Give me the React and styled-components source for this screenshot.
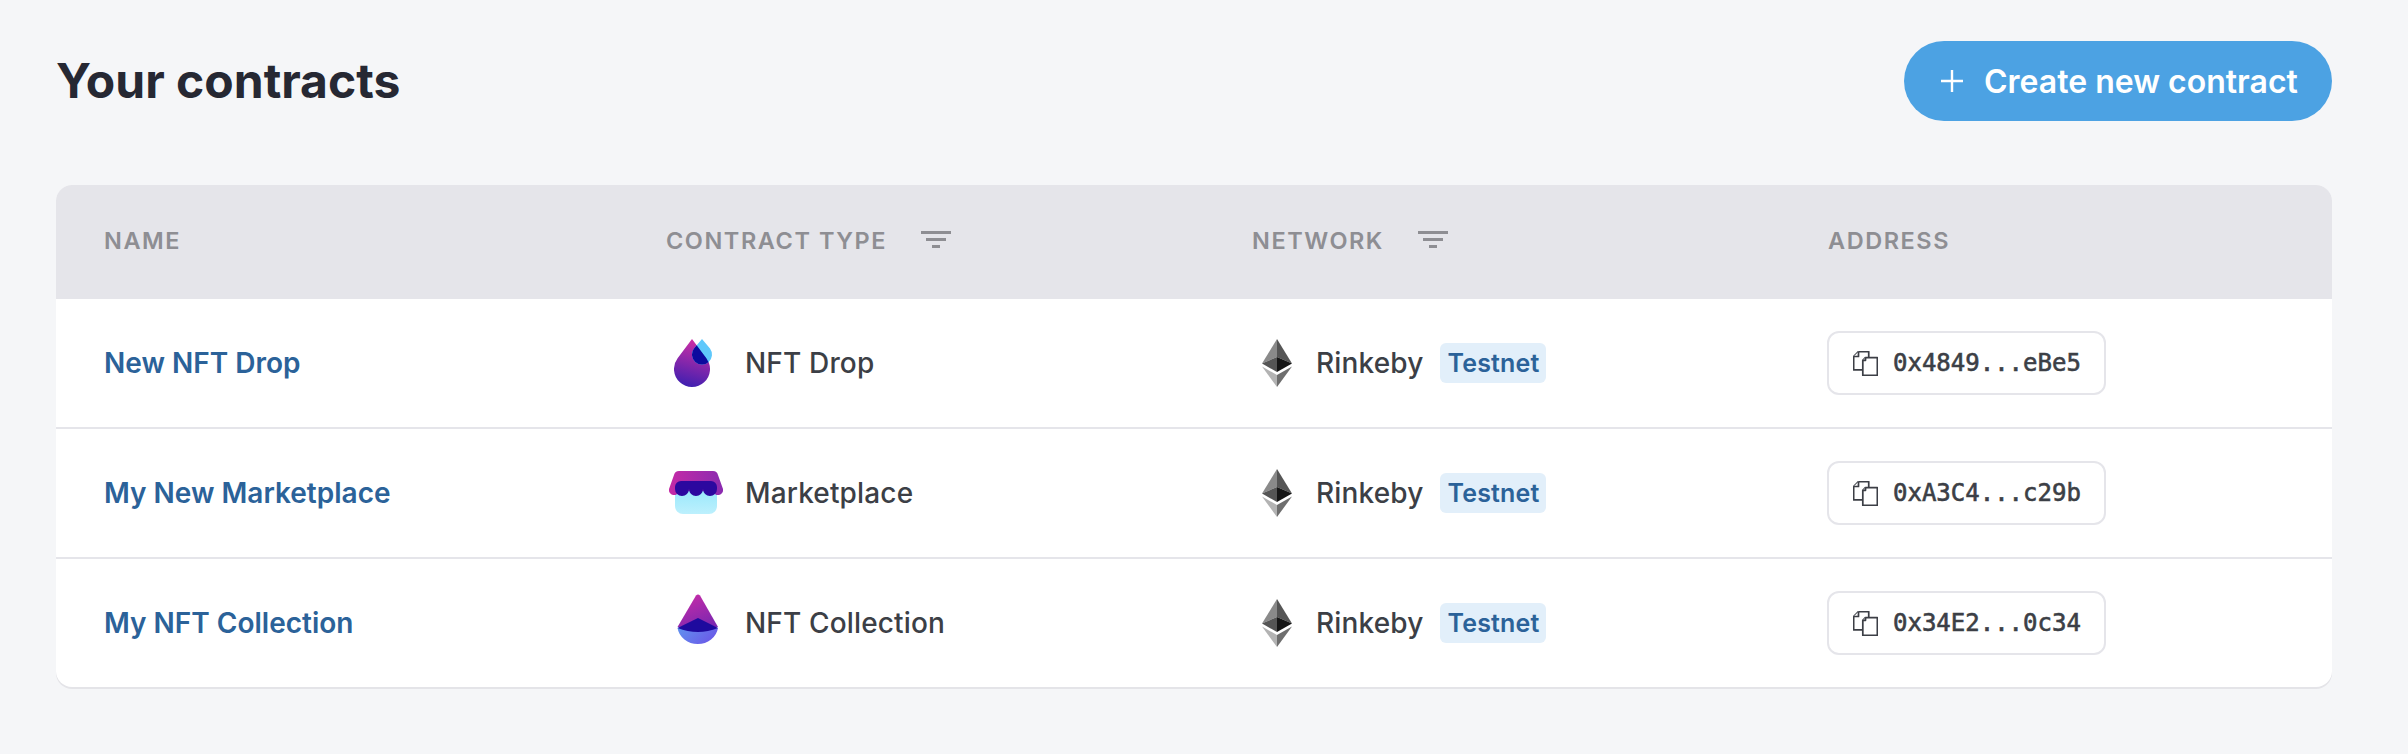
import React from "react";
import styled, { createGlobalStyle } from "styled-components";

const GlobalStyle = createGlobalStyle`
  html, body {
    margin: 0;
    background: #f5f6f8;
  }
  body {
    font-family: "Inter", "Liberation Sans", sans-serif;
  }
`;

const Page = styled.div`
  padding: 41px 76px 0 56px;
  min-height: 713px;
`;

const TopBar = styled.div`
  display: flex;
  justify-content: space-between;
  align-items: center;
  height: 80px;
  margin-bottom: 64px;
`;

const Title = styled.h1`
  margin: 0 0 2px;
  font-size: 48px;
  font-weight: 700;
  color: #262833;
`;

const CreateButton = styled.button`
  display: flex;
  align-items: center;
  gap: 20px;
  height: 80px;
  width: 428px;
  padding: 0 32px 0 36px;
  box-sizing: border-box;
  border: none;
  border-radius: 40px;
  background: #4ca2e3;
  color: #fff;
  font-family: inherit;
  font-size: 32px;
  font-weight: 600;
  white-space: nowrap;
`;

const Card = styled.div`
  border-radius: 16px;
  overflow: hidden;
  background: #fff;
  box-shadow: 0 2px 0 #e4e4e8;
`;

const HeadRow = styled.div`
  display: grid;
  grid-template-columns: 562px 586px 576px 552px;
  align-items: center;
  height: 114px;
  background: #e5e5ea;
`;

const HeadCell = styled.div`
  display: flex;
  align-items: center;
  gap: 34px;
  padding: 0 0 4px 48px;
  font-size: 23.5px;
  font-weight: 600;
  letter-spacing: 1.55px;
  color: #8e8e93;
`;

const Row = styled.div`
  display: grid;
  grid-template-columns: 562px 586px 576px 552px;
  align-items: center;
  height: 128px;
  border-bottom: 2px solid #e5e5ea;

  &:last-child {
    border-bottom: none;
  }
`;

const Cell = styled.div`
  display: flex;
  align-items: center;
  padding-left: 48px;
  font-size: 28px;
  font-weight: 500;
  letter-spacing: 0.15px;
  color: #3c3f46;
`;

const NameLink = styled.a`
  font-weight: 600;
  letter-spacing: 0;
  color: #2b6299;
`;

const TypeIcon = styled.span`
  display: flex;
  justify-content: center;
  width: 60px;
  margin-right: 19px;
`;

const NetworkIcon = styled.span`
  display: flex;
  margin: 0 24px 0 10px;
`;

const Badge = styled.span`
  margin-left: 17px;
  height: 40px;
  width: 106px;
  display: flex;
  align-items: center;
  justify-content: center;
  border-radius: 6px;
  background: #e2effa;
  color: #2b6299;
  font-size: 25px;
  font-weight: 600;
`;

const AddressButton = styled.div`
  display: flex;
  align-items: center;
  gap: 15px;
  width: 279px;
  height: 64px;
  box-sizing: border-box;
  padding-left: 24px;
  margin-left: -1px;
  border: 2px solid #e5e5ea;
  border-radius: 12px;
  background: #fff;
  font-family: "DejaVu Sans Mono", "Liberation Mono", monospace;
  font-size: 24px;
  letter-spacing: 0;
  color: #3c3f46;
  -webkit-text-stroke: 0.6px #3c3f46;
`;

const PlusIcon = () => (
  <svg width="24" height="24" viewBox="0 0 24 24" fill="none" stroke="#fff" strokeWidth="2.4">
    <path d="M12 1v22M1 12h22" />
  </svg>
);

const FilterIcon = () => (
  <svg width="30" height="18" viewBox="0 0 30 18" fill="#8e8e93">
    <rect x="0" y="0" width="30" height="3" />
    <rect x="5" y="7" width="20" height="3" />
    <rect x="11" y="14" width="8" height="3" />
  </svg>
);

const CopyIcon = () => (
  <svg width="25" height="25" viewBox="0.4 0.4 23.2 23.2" fill="#fff" stroke="#3c3f46" strokeWidth="1.6" strokeLinejoin="round">
    <path d="M5.5 1H15v5M5.5 1 1 5.5V18h8" />
    <path d="M1 5.5h4.5V1" />
    <path d="M12 6.5h11V23H9.5V9z" />
    <path d="M9.5 9H12V6.5" />
  </svg>
);

const EthIcon = () => (
  <svg width="30" height="48" viewBox="0 0 30 48">
    <polygon points="15,0 0,24.5 15,18" fill="#8a8a8a" />
    <polygon points="15,0 30,24.5 15,18" fill="#555" />
    <polygon points="15,18 0,24.5 15,33" fill="#555" />
    <polygon points="15,18 30,24.5 15,33" fill="#151515" />
    <polygon points="0,27.5 15,48 15,36" fill="#b3b3b3" />
    <polygon points="30,27.5 15,48 15,36" fill="#6e6e6e" />
  </svg>
);

const mainDrop = "M18 0L32.4 19.2A18 18 0 1 1 3.6 19.2Z";
const smallDrop = "M28 0L36 9.6A10 10 0 1 1 20 9.6Z";

const DropIcon = () => (
  <svg width="44" height="48" viewBox="0 0 44 48">
    <defs>
      <linearGradient id="dropMain" x1="0.6" y1="0" x2="0.4" y2="1">
        <stop offset="0" stopColor="#d02fa5" />
        <stop offset="1" stopColor="#3f1fb0" />
      </linearGradient>
      <clipPath id="dropClip">
        <path d={mainDrop} />
      </clipPath>
    </defs>
    <path d={mainDrop} fill="url(#dropMain)" />
    <path d={smallDrop} fill="#5fc8fb" />
    <path d={smallDrop} fill="#0c0a9e" clipPath="url(#dropClip)" />
  </svg>
);

const StoreIcon = () => (
  <svg width="54" height="44" viewBox="0 0 54 44">
    <defs>
      <linearGradient id="storeTop" x1="0" y1="0" x2="1" y2="0">
        <stop offset="0" stopColor="#c52aa6" />
        <stop offset="1" stopColor="#8a2bb0" />
      </linearGradient>
      <linearGradient id="storeBody" x1="0" y1="0" x2="0" y2="1">
        <stop offset="0" stopColor="#8fe6fb" />
        <stop offset="1" stopColor="#bdf0fd" />
      </linearGradient>
    </defs>
    <rect x="6" y="12" width="42" height="31" rx="8" fill="url(#storeBody)" />
    <path d="M10 0H44Q48 0 49 4L54 18A5 5 0 0 1 44 20L10 20A5 5 0 0 1 0 18L5 4Q6 0 10 0Z" fill="url(#storeTop)" />
    <path d="M6 16A6 6 0 0 1 12 10H42A6 6 0 0 1 48 16V18A7 7 0 0 1 34 18A7 7 0 0 1 20 18A7 7 0 0 1 6 18Z" fill="#2c089f" />
  </svg>
);

const CollectionIcon = () => (
  <svg width="46" height="58" viewBox="-4 0 46 58">
    <defs>
      <linearGradient id="collTop" x1="0.3" y1="0" x2="0.8" y2="1">
        <stop offset="0" stopColor="#c42ca8" />
        <stop offset="1" stopColor="#7a27b0" />
      </linearGradient>
      <linearGradient id="collBottom" x1="0" y1="0" x2="1" y2="0.6">
        <stop offset="0" stopColor="#5f9cf0" />
        <stop offset="1" stopColor="#6a5be8" />
      </linearGradient>
    </defs>
    <path d="M19 1.5q2-2 4 0L41 33H0.5z" fill="url(#collTop)" />
    <path d="M0.5 34A20.5 19 0 0 0 41 34L21 26z" fill="url(#collBottom)" />
    <path d="M0.5 34 21 24 41 34Q21 42 .5 34z" fill="#1e0a9e" />
  </svg>
);

const contracts = [
  { name: "New NFT Drop", type: "NFT Drop", icon: <DropIcon />, address: "0x4849...eBe5" },
  { name: "My New Marketplace", type: "Marketplace", icon: <StoreIcon />, address: "0xA3C4...c29b" },
  { name: "My NFT Collection", type: "NFT Collection", icon: <CollectionIcon />, address: "0x34E2...0c34" },
];

export default function App() {
  return (
    <Page>
      <GlobalStyle />
      <TopBar>
        <Title>Your contracts</Title>
        <CreateButton>
          <PlusIcon />
          Create new contract
        </CreateButton>
      </TopBar>
      <Card>
        <HeadRow>
          <HeadCell>NAME</HeadCell>
          <HeadCell>CONTRACT TYPE <FilterIcon /></HeadCell>
          <HeadCell>NETWORK <FilterIcon /></HeadCell>
          <HeadCell>ADDRESS</HeadCell>
        </HeadRow>
        {contracts.map((contract) => (
          <Row key={contract.address}>
            <Cell><NameLink>{contract.name}</NameLink></Cell>
            <Cell>
              <TypeIcon>{contract.icon}</TypeIcon>
              {contract.type}
            </Cell>
            <Cell>
              <NetworkIcon><EthIcon /></NetworkIcon>
              Rinkeby
              <Badge>Testnet</Badge>
            </Cell>
            <Cell>
              <AddressButton>
                <CopyIcon />
                {contract.address}
              </AddressButton>
            </Cell>
          </Row>
        ))}
      </Card>
    </Page>
  );
}
